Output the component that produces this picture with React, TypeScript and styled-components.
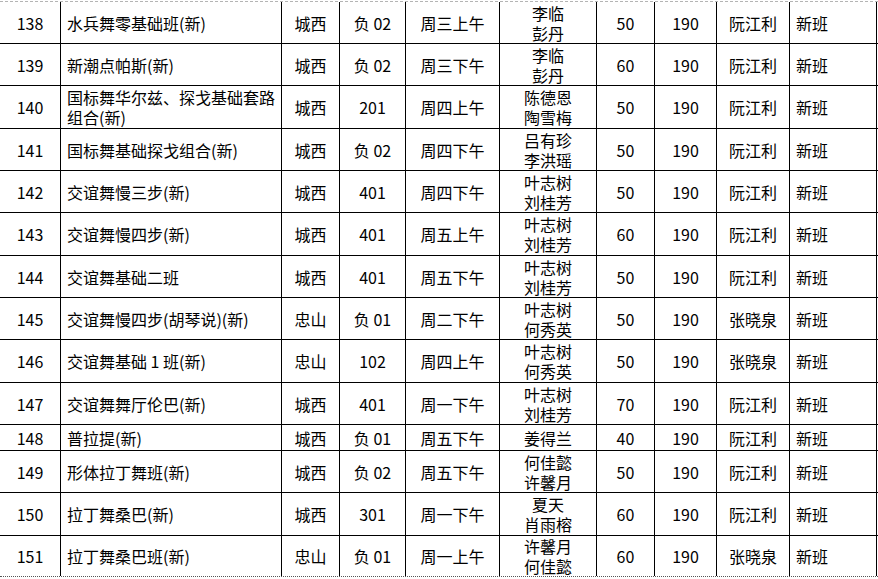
import React from "react";
import styled, { createGlobalStyle } from "styled-components";

const GlobalStyle = createGlobalStyle`
  html, body {
    margin: 0;
    padding: 0;
    background: #fff;
  }
  body {
    font-family: "Noto Sans CJK SC", "Liberation Sans", sans-serif;
    color: #000;
  }
`;

type Align = "left" | "center";

const COLS = [61, 221, 58, 66, 94, 97, 58, 62, 73, 87];
const ALIGN: Align[] = [
  "center",
  "left",
  "center",
  "center",
  "center",
  "center",
  "center",
  "center",
  "center",
  "left",
];

type Course = {
  no: number;
  name: string;
  area: string;
  room: string;
  time: string;
  teacher: string[];
  size: number;
  fee: number;
  staff: string;
  kind: string;
  h: number;
};

const rows: Course[] = [
  { no: 138, name: "水兵舞零基础班(新)", area: "城西", room: "负 02", time: "周三上午", teacher: ["李临", "彭丹"], size: 50, fee: 190, staff: "阮江利", kind: "新班", h: 42 },
  { no: 139, name: "新潮点帕斯(新)", area: "城西", room: "负 02", time: "周三下午", teacher: ["李临", "彭丹"], size: 60, fee: 190, staff: "阮江利", kind: "新班", h: 42 },
  { no: 140, name: "国标舞华尔兹、探戈基础套路组合(新)", area: "城西", room: "201", time: "周四上午", teacher: ["陈德恩", "陶雪梅"], size: 50, fee: 190, staff: "阮江利", kind: "新班", h: 43 },
  { no: 141, name: "国标舞基础探戈组合(新)", area: "城西", room: "负 02", time: "周四下午", teacher: ["吕有珍", "李洪瑶"], size: 50, fee: 190, staff: "阮江利", kind: "新班", h: 42 },
  { no: 142, name: "交谊舞慢三步(新)", area: "城西", room: "401", time: "周四下午", teacher: ["叶志树", "刘桂芳"], size: 50, fee: 190, staff: "阮江利", kind: "新班", h: 42 },
  { no: 143, name: "交谊舞慢四步(新)", area: "城西", room: "401", time: "周五上午", teacher: ["叶志树", "刘桂芳"], size: 60, fee: 190, staff: "阮江利", kind: "新班", h: 43 },
  { no: 144, name: "交谊舞基础二班", area: "城西", room: "401", time: "周五下午", teacher: ["叶志树", "刘桂芳"], size: 50, fee: 190, staff: "阮江利", kind: "新班", h: 42 },
  { no: 145, name: "交谊舞慢四步(胡琴说)(新)", area: "忠山", room: "负 01", time: "周二下午", teacher: ["叶志树", "何秀英"], size: 50, fee: 190, staff: "张晓泉", kind: "新班", h: 42 },
  { no: 146, name: "交谊舞基础 1 班(新)", area: "忠山", room: "102", time: "周四上午", teacher: ["叶志树", "何秀英"], size: 50, fee: 190, staff: "张晓泉", kind: "新班", h: 43 },
  { no: 147, name: "交谊舞舞厅伦巴(新)", area: "城西", room: "401", time: "周一下午", teacher: ["叶志树", "刘桂芳"], size: 70, fee: 190, staff: "阮江利", kind: "新班", h: 42 },
  { no: 148, name: "普拉提(新)", area: "城西", room: "负 01", time: "周五下午", teacher: ["姜得兰"], size: 40, fee: 190, staff: "阮江利", kind: "新班", h: 26 },
  { no: 149, name: "形体拉丁舞班(新)", area: "城西", room: "负 02", time: "周五下午", teacher: ["何佳懿", "许馨月"], size: 50, fee: 190, staff: "阮江利", kind: "新班", h: 42 },
  { no: 150, name: "拉丁舞桑巴(新)", area: "城西", room: "301", time: "周一下午", teacher: ["夏天", "肖雨榕"], size: 60, fee: 190, staff: "阮江利", kind: "新班", h: 43 },
  { no: 151, name: "拉丁舞桑巴班(新)", area: "忠山", room: "负 01", time: "周一上午", teacher: ["许馨月", "何佳懿"], size: 60, fee: 190, staff: "张晓泉", kind: "新班", h: 41 },
];

const Sheet = styled.div`
  width: 878px;
  padding-top: 1px;
`;

const PageBreak = styled.div`
  border-top: 1px dashed #b4b4b4;
`;

const Row = styled.div<{ $h: number; $last?: boolean }>`
  display: grid;
  grid-template-columns: ${COLS.map((w) => `${w}px`).join(" ")};
  height: ${(p) => p.$h}px;
  box-sizing: border-box;
  border-bottom: ${(p) => (p.$last ? "1px dotted #555" : "1px solid #000")};
`;

const Cell = styled.div<{ $align: Align }>`
  box-sizing: border-box;
  border-right: 1px solid #000;
  display: flex;
  flex-direction: column;
  justify-content: center;
  align-items: ${(p) => (p.$align === "left" ? "flex-start" : "center")};
  text-align: ${(p) => p.$align};
  padding: ${(p) => (p.$align === "left" ? "0 4px 0 6px" : "0")};
  font-size: 16px;
  line-height: 20px;
  overflow: hidden;
`;

const Line = styled.span`
  display: block;
  white-space: nowrap;
  height: 20px;
`;

export default function App() {
  return (
    <>
      <GlobalStyle />
      <Sheet>
        <PageBreak />
        {rows.map((r, i) => {
          const cells: React.ReactNode[] = [
            r.no,
            r.name,
            r.area,
            r.room,
            r.time,
            r.teacher.map((t) => <Line key={t}>{t}</Line>),
            r.size,
            r.fee,
            r.staff,
            r.kind,
          ];
          return (
            <Row key={r.no} $h={r.h} $last={i === rows.length - 1}>
              {cells.map((c, j) => (
                <Cell key={j} $align={ALIGN[j]}>
                  {c}
                </Cell>
              ))}
            </Row>
          );
        })}
      </Sheet>
    </>
  );
}
